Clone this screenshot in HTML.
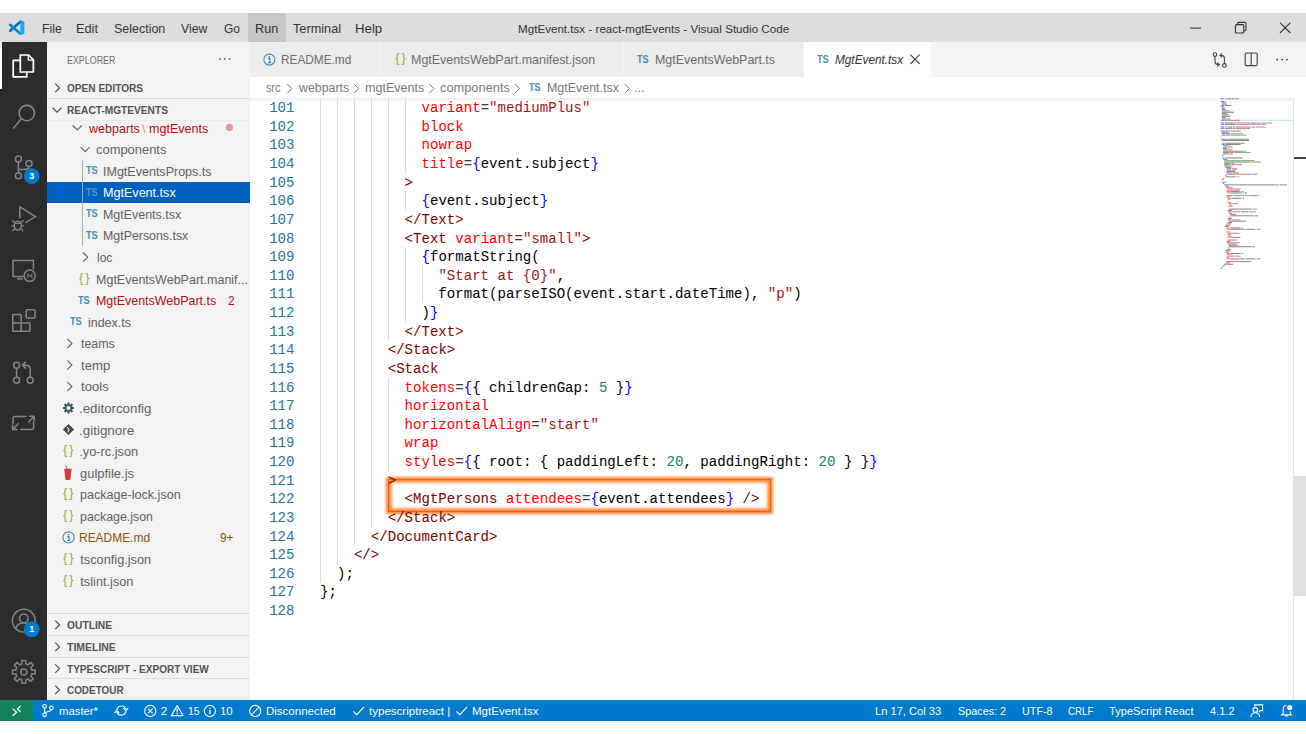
<!DOCTYPE html>
<html lang="en">
<head>
<meta charset="utf-8">
<title>MgtEvent.tsx - react-mgtEvents - Visual Studio Code</title>
<style>
*{box-sizing:border-box;margin:0;padding:0}
html,body{width:1306px;height:734px;overflow:hidden;background:#fff}
body{position:relative;font-family:"Liberation Sans",sans-serif;color:#616161;font-size:12.75px}
.layer{position:absolute;left:0;top:0;width:0;height:0;z-index:6}
.x{position:absolute;white-space:pre;line-height:20px;height:20px;z-index:6;transform-origin:0 0}
svg.ov{position:absolute;left:0;top:0;z-index:5;pointer-events:none}
#title{position:absolute;left:0;top:13px;width:1306px;height:29px;background:#dddddd}
#title .run{position:absolute;left:247.5px;top:0;width:38px;height:29px;background:#c6c6c6}
#act{position:absolute;left:0;top:42px;width:47px;height:658px;background:#2c2c2c}
#act .ind{position:absolute;left:0;top:0;width:2px;height:47px;background:#fff}
.badge{position:absolute;z-index:6;width:16px;height:16px;line-height:16px;text-align:center;color:#fff;font-size:9px;font-weight:bold}
#side{position:absolute;left:47px;top:42px;width:203px;height:658px;background:#f3f3f3;overflow:hidden}
#side .hr{position:absolute;left:0;width:203px;height:1px;background:#dcdcdc}
#side .sel{position:absolute;left:0;top:139.8px;width:203px;height:21.2px;background:#0060c0}
#side .ig{position:absolute;left:35.2px;top:118px;width:1px;height:86.4px;background:#a9a9a9}
#tabs{position:absolute;left:250px;top:42px;width:1056px;height:35px;background:#f3f3f3}
#tabs .tab{position:absolute;top:0;height:35px;background:#ececec;border-right:1px solid #f3f3f3}
#tabs .tab.on{background:#fff}
#crumbs{position:absolute;left:250px;top:77px;width:1056px;height:21px;background:#fff}
#editor{position:absolute;left:250px;top:98px;width:1056px;height:602px;background:#fff;overflow:hidden}
#editor .ln{position:relative;height:18.63px;line-height:18.63px;white-space:pre;font-family:"Liberation Mono",monospace;font-size:14.08px;color:#000;padding-left:70.1px;z-index:2}
#editor .ln b{position:absolute;left:0;top:0;width:44.5px;text-align:right;font-weight:normal;color:#237893}
#editor .ln i{font-style:normal}
#editor .code{position:absolute;left:0;top:1.2px;width:1043px}
#editor u{position:absolute;width:1px;background:#dcdcdc;text-decoration:none;display:block}
.e{color:#3a3a3a}.a{color:#ff0000}.s{color:#a31515}.b{color:#0000ff}.t{color:#800000}.n{color:#09885a}
#hl{position:absolute;left:137.5px;top:381px;width:383.6px;height:32.6px;border:1.2px solid #f2610f;box-shadow:0 0 2.5px 2px #ff8433,inset 0 0 3px 2.6px #ff8433;z-index:1}
#editor .shadow{position:absolute;left:0;top:0;width:1043px;height:6px;box-shadow:#dddddd 0 6px 6px -6px inset;z-index:3}
#sb{position:absolute;left:1043px;top:0;width:13px;height:602px;border-left:1px solid #e4e4e4;background:#fff;z-index:4}
#sb .th{position:absolute;left:0;top:378px;width:12px;height:120px;background:#e1e1e1}
#sb .mk{position:absolute;left:0;top:59px;width:12px;height:2px;background:#424242}
#status{position:absolute;left:0;top:699.7px;width:1306px;height:21px;background:#007acc}
#status .rem{position:absolute;left:0;top:0;width:33.4px;height:21px;background:#16825d}
</style>
</head>
<body>
<div id="title"><div class="run"></div></div>
<div id="act"><div class="ind"></div></div>
<div class="badge" style="left:23.7px;top:168.1px">3</div>
<div class="badge" style="left:23.7px;top:621.3px">1</div>
<div id="side">
<div class="hr" style="top:56.3px"></div>
<div class="hr" style="top:78.3px;background:#e9e9e9"></div>
<div class="hr" style="top:571.4px"></div>
<div class="hr" style="top:593.4px"></div>
<div class="hr" style="top:615.1px"></div>
<div class="hr" style="top:636.4px"></div>
<div class="sel"></div>
<div class="ig"></div>
</div>
<div id="tabs">
<div class="tab" style="left:0;width:129.5px"></div>
<div class="tab" style="left:129.5px;width:244px"></div>
<div class="tab" style="left:373.5px;width:180.5px"></div>
<div class="tab on" style="left:554px;width:128.4px"></div>
</div>
<div id="crumbs"></div>
<div id="editor">
<u style="left:70.1px;top:0.20px;height:484.38px"></u><u style="left:87.0px;top:0.20px;height:465.75px"></u><u style="left:103.9px;top:0.20px;height:447.12px"></u><u style="left:120.8px;top:0.20px;height:428.49px"></u><u style="left:137.7px;top:0.20px;height:242.19px"></u><u style="left:137.7px;top:279.65px;height:93.15px"></u><u style="left:137.7px;top:391.43px;height:18.63px"></u><u style="left:154.6px;top:0.20px;height:74.52px"></u><u style="left:154.6px;top:93.35px;height:18.63px"></u><u style="left:154.6px;top:149.24px;height:74.52px"></u><u style="left:171.5px;top:167.87px;height:37.26px"></u>

<div id="hl"></div>
<div class="code">
<div class="ln"><b>101</b>            <i class="a">variant</i><i class="e">=</i><i class="s">"mediumPlus"</i></div>
<div class="ln"><b>102</b>            <i class="a">block</i></div>
<div class="ln"><b>103</b>            <i class="a">nowrap</i></div>
<div class="ln"><b>104</b>            <i class="a">title</i><i class="e">=</i><i class="b">{</i>event.subject<i class="b">}</i></div>
<div class="ln"><b>105</b>          <i class="t">&gt;</i></div>
<div class="ln"><b>106</b>            <i class="b">{</i>event.subject<i class="b">}</i></div>
<div class="ln"><b>107</b>          <i class="t">&lt;/Text&gt;</i></div>
<div class="ln"><b>108</b>          <i class="t">&lt;Text</i> <i class="a">variant</i><i class="e">=</i><i class="s">"small"</i><i class="t">&gt;</i></div>
<div class="ln"><b>109</b>            <i class="b">{</i>formatString(</div>
<div class="ln"><b>110</b>              <i class="s">"Start at {0}"</i>,</div>
<div class="ln"><b>111</b>              format(parseISO(event.start.dateTime), <i class="s">"p"</i>)</div>
<div class="ln"><b>112</b>            )<i class="b">}</i></div>
<div class="ln"><b>113</b>          <i class="t">&lt;/Text&gt;</i></div>
<div class="ln"><b>114</b>        <i class="t">&lt;/Stack&gt;</i></div>
<div class="ln"><b>115</b>        <i class="t">&lt;Stack</i></div>
<div class="ln"><b>116</b>          <i class="a">tokens</i><i class="e">=</i><i class="b">{</i>{ childrenGap: <i class="n">5</i> }<i class="b">}</i></div>
<div class="ln"><b>117</b>          <i class="a">horizontal</i></div>
<div class="ln"><b>118</b>          <i class="a">horizontalAlign</i><i class="e">=</i><i class="s">"start"</i></div>
<div class="ln"><b>119</b>          <i class="a">wrap</i></div>
<div class="ln"><b>120</b>          <i class="a">styles</i><i class="e">=</i><i class="b">{</i>{ root: { paddingLeft: <i class="n">20</i>, paddingRight: <i class="n">20</i> } }<i class="b">}</i></div>
<div class="ln"><b>121</b>        <i class="t">&gt;</i></div>
<div class="ln"><b>122</b>          <i class="t">&lt;MgtPersons</i> <i class="a">attendees</i><i class="e">=</i><i class="b">{</i>event.attendees<i class="b">}</i> <i class="t">/&gt;</i></div>
<div class="ln"><b>123</b>        <i class="t">&lt;/Stack&gt;</i></div>
<div class="ln"><b>124</b>      <i class="t">&lt;/DocumentCard&gt;</i></div>
<div class="ln"><b>125</b>    <i class="t">&lt;/&gt;</i></div>
<div class="ln"><b>126</b>  );</div>
<div class="ln"><b>127</b>};</div>
<div class="ln"><b>128</b></div>
</div>
<div class="shadow"></div>
<div id="sb"><div class="mk"></div><div class="th"></div></div>
</div>
<div id="status"><div class="rem"></div></div>
<svg class="ov" width="1306" height="734" viewBox="0 0 1306 734">
<g transform="translate(8.4,19.5) scale(1.03)"><path d="M11.4 2.4 L1.7 10.9" stroke="#0a6cbd" stroke-width="2.5" stroke-linecap="round"/><path d="M11.4 13.6 L1.7 5.1" stroke="#0a84d8" stroke-width="2.5" stroke-linecap="round"/><path d="M11.6 0.5 L15.5 2.4 V13.6 L11.6 15.5 Z" fill="#22a0f2"/></g>
<path d="M1190 28.1 H1201" stroke="#333333" stroke-width="1.1"/><g fill="none" stroke="#333333" stroke-width="1.1"><rect x="1235.4" y="24.6" width="8.4" height="8.4" rx="1"/><path d="M1237.6 24.4 V23.4 Q1237.6 22.4 1238.6 22.4 H1245 Q1246 22.4 1246 23.4 V29.8 Q1246 30.8 1245 30.8 H1244"/></g><path d="M1280 22.6 L1290.4 33 M1290.4 22.6 L1280 33" stroke="#333333" stroke-width="1.1"/>
<g fill="none" stroke="#ffffff" stroke-width="1.7" stroke-linejoin="round" stroke-linecap="round"><path d="M20.3 55 H28.6 L33.4 59.8 V72 H20.3 Z"/><path d="M28.3 55.3 V60.1 H33.2" stroke-width="1.3"/><path d="M19.8 60.3 H13.2 V76.8 H26.8 V72.6"/></g>
<g fill="none" stroke="#868686" stroke-width="1.6"><circle cx="26.8" cy="113.1" r="7.7"/><path d="M21.4 118.7 L13.2 128.4"/></g>
<g fill="none" stroke="#868686" stroke-width="1.5"><circle cx="18.4" cy="159.1" r="3"/><circle cx="29" cy="163.6" r="3"/><circle cx="18.4" cy="175.7" r="3"/><path d="M18.4 162.1 V172.7 M29 166.6 C29 169.6 26 169.6 22.5 169.6 H18.6"/></g>
<circle cx="31.7" cy="176.1" r="7.9" fill="#007acc"/>
<g fill="none" stroke="#868686" stroke-width="1.5" stroke-linejoin="miter"><path d="M19.8 218.3 V206.8 L35.5 216.6 L25.2 222.8"/><ellipse cx="17.8" cy="225.6" rx="3.6" ry="4.4"/><path d="M14.6 222.4 L12 220.2 M21 222.4 L23.6 220.2 M14.2 225.8 H11.4 M21.4 225.8 H24.2 M14.8 228.8 L12.2 231 M20.8 228.8 L23.4 231 M15 223.4 H20.6" stroke-width="1.3"/></g>
<g fill="none" stroke="#868686" stroke-width="1.5"><path d="M23.6 276.4 H13 V260.4 H33.4 V269.6"/><path d="M17 278.9 H22.8"/><circle cx="29.7" cy="275.7" r="5.6"/><path d="M27.2 273.9 L29 275.7 L27.2 277.5 M32.4 273.9 L30.6 275.7 L32.4 277.5" stroke-width="1.1"/></g>
<g fill="none" stroke="#868686" stroke-width="1.5" stroke-linejoin="round"><path d="M21.2 314.4 H12.8 V331.3 H29.9 V322.9 H12.8 M21.2 314.4 V331.3"/><rect x="26.2" y="309.8" width="8.8" height="8.2" rx="0.8"/></g>
<g fill="none" stroke="#868686" stroke-width="1.5"><circle cx="16.6" cy="365.2" r="3"/><circle cx="16.6" cy="380.2" r="3"/><circle cx="30.2" cy="380.2" r="3"/><path d="M16.6 368.2 V377.2 M30.2 377.2 V369.4 C30.2 366.2 28.4 365.2 25.6 365.2 H22.8 M25.8 361.8 L22.4 365.2 L25.8 368.6"/></g>
<g fill="none" stroke="#868686" stroke-width="1.5" stroke-linecap="round" stroke-linejoin="round"><path d="M26 416.4 H15 Q13 416.4 13 418.4 V423.6 M20.6 429.4 H31.6 Q33.6 429.4 33.6 427.4 V422"/><path d="M28.6 422 L34 416.4 M29.8 416.2 H34.2 V420.6 M18.2 423.8 L12.8 429.4 M12.6 425.2 V429.6 H17"/></g>
<g fill="none" stroke="#868686" stroke-width="1.5"><circle cx="23.8" cy="620.7" r="11.4"/><circle cx="23.8" cy="618.4" r="4.3"/><path d="M15.6 628.6 C16.6 624.8 19.6 622.9 23.8 622.9 C28 622.9 31 624.8 32 628.6"/></g>
<circle cx="31.7" cy="629.3" r="7.9" fill="#007acc"/>
<g fill="none" stroke="#868686" stroke-width="1.5" stroke-linejoin="round"><path d="M21.8 663.9 L21.8 660.5 L25.8 660.5 L25.8 663.9 L28.0 664.9 L30.5 662.4 L33.3 665.2 L30.8 667.7 L31.8 669.9 L35.2 669.9 L35.2 673.9 L31.8 673.9 L30.8 676.1 L33.3 678.6 L30.5 681.4 L28.0 678.9 L25.8 679.9 L25.8 683.3 L21.8 683.3 L21.8 679.9 L19.6 678.9 L17.1 681.4 L14.3 678.6 L16.8 676.1 L15.8 673.9 L12.4 673.9 L12.4 669.9 L15.8 669.9 L16.8 667.7 L14.3 665.2 L17.1 662.4 L19.6 664.9 Z"/><circle cx="23.8" cy="671.9" r="3"/></g>
<circle cx="220" cy="58.9" r="0.95" fill="#5a5a5a"/>
<circle cx="224.8" cy="58.9" r="0.95" fill="#5a5a5a"/>
<circle cx="229.6" cy="58.9" r="0.95" fill="#5a5a5a"/>
<path d="M55.3 83.7 L59.5 87.9 L55.3 92.1" fill="none" stroke="#4d4d4d" stroke-width="1.2"/>
<path d="M52.5 107.6 L57.0 112.1 L61.5 107.6" fill="none" stroke="#4d4d4d" stroke-width="1.2"/>
<path d="M55.3 620.7 L59.5 624.9 L55.3 629.1" fill="none" stroke="#4d4d4d" stroke-width="1.2"/>
<path d="M55.3 642.7 L59.5 646.9 L55.3 651.1" fill="none" stroke="#4d4d4d" stroke-width="1.2"/>
<path d="M55.3 664.4 L59.5 668.6 L55.3 672.8" fill="none" stroke="#4d4d4d" stroke-width="1.2"/>
<path d="M55.3 685.6 L59.5 689.8 L55.3 694.0" fill="none" stroke="#4d4d4d" stroke-width="1.2"/>
<path d="M72.8 125.5 L77.3 130.0 L81.8 125.5" fill="none" stroke="#616161" stroke-width="1.1"/>
<path d="M80.7 147.1 L85.2 151.6 L89.7 147.1" fill="none" stroke="#616161" stroke-width="1.1"/>
<path d="M83.1 252.5 L87.7 257.1 L83.1 261.7" fill="none" stroke="#616161" stroke-width="1.1"/>
<path d="M67.3 338.8 L71.9 343.4 L67.3 348.0" fill="none" stroke="#616161" stroke-width="1.1"/>
<path d="M67.3 360.4 L71.9 365.0 L67.3 369.6" fill="none" stroke="#616161" stroke-width="1.1"/>
<path d="M67.3 381.9 L71.9 386.5 L67.3 391.2" fill="none" stroke="#616161" stroke-width="1.1"/>
<circle cx="229.5" cy="127.4" r="3.6" fill="#e29b9b"/>
<path d="M72.4 407.0 L74.0 406.9 L74.0 409.1 L72.4 409.0 L72.0 410.0 L73.2 411.1 L71.6 412.7 L70.5 411.5 L69.5 411.9 L69.6 413.5 L67.4 413.5 L67.5 411.9 L66.5 411.5 L65.4 412.7 L63.8 411.1 L65.0 410.0 L64.6 409.0 L63.0 409.1 L63.0 406.9 L64.6 407.0 L65.0 406.0 L63.8 404.9 L65.4 403.3 L66.5 404.5 L67.5 404.1 L67.4 402.5 L69.6 402.5 L69.5 404.1 L70.5 404.5 L71.6 403.3 L73.2 404.9 L72.0 406.0 Z" fill="#42535b"/><circle cx="68.5" cy="408.0" r="2.1" fill="#f3f3f3"/>
<path d="M68.5 423.9 L74.1 429.5 L68.5 435.1 L62.9 429.5 Z" fill="#3b4b53"/><path d="M67 426.9 L69.6 429.5 M68.3 428.3 V432.3" stroke="#f3f3f3" stroke-width="1" fill="none"/>
<path d="M64.2 468.8 H71.6 L70.4 479.4 Q67.9 480.4 65.4 479.4 Z" fill="#cc3e44"/><path d="M65.4 465.4 L67.4 468.8" stroke="#cc3e44" stroke-width="1" fill="none"/>
<circle cx="68.6" cy="537.43" r="5.6" fill="none" stroke="#3e8fb3" stroke-width="1.1"/><circle cx="68.6" cy="534.8299999999999" r="0.9" fill="#3e8fb3"/><path d="M67.3 536.53 H69.1 V540.53 M67.1 540.53 H70.3" stroke="#3e8fb3" stroke-width="1.2" fill="none"/>
<circle cx="269.4" cy="59.6" r="5.5" fill="none" stroke="#3e8fb3" stroke-width="1.1"/><circle cx="269.4" cy="57.0" r="0.9" fill="#3e8fb3"/><path d="M268.09999999999997 58.7 H269.9 V62.7 M267.9 62.7 H271.09999999999997" stroke="#3e8fb3" stroke-width="1.2" fill="none"/>
<path d="M910.4 54.6 L919.6 63.8 M919.6 54.6 L910.4 63.8" stroke="#333333" stroke-width="1.1"/>
<g fill="none" stroke="#424242" stroke-width="1.1"><circle cx="1215" cy="54.6" r="1.8"/><circle cx="1224.4" cy="65.4" r="1.8"/><path d="M1215 56.4 V61.6 Q1215 64.6 1218 64.6 H1219 M1217.2 62.6 L1219.4 64.6 L1217.2 66.6 M1224.4 63.6 V58.4 Q1224.4 55.4 1221.4 55.4 H1220.4 M1222.2 53.4 L1220 55.4 L1222.2 57.4"/></g>
<g fill="none" stroke="#424242" stroke-width="1.1"><rect x="1245.2" y="53" width="12" height="12.6" rx="1.2"/><path d="M1251.2 53 V65.6"/></g>
<circle cx="1277.2" cy="59.6" r="0.95" fill="#424242"/>
<circle cx="1282.1" cy="59.6" r="0.95" fill="#424242"/>
<circle cx="1287" cy="59.6" r="0.95" fill="#424242"/>
<path d="M287.3 84.0 L291.9 88.6 L287.3 93.2" fill="none" stroke="#7a7a7a" stroke-width="1.0"/>
<path d="M354.1 84.0 L358.7 88.6 L354.1 93.2" fill="none" stroke="#7a7a7a" stroke-width="1.0"/>
<path d="M429.3 84.0 L433.9 88.6 L429.3 93.2" fill="none" stroke="#7a7a7a" stroke-width="1.0"/>
<path d="M514.8 84.0 L519.4 88.6 L514.8 93.2" fill="none" stroke="#7a7a7a" stroke-width="1.0"/>
<path d="M624.8 84.0 L629.4 88.6 L624.8 93.2" fill="none" stroke="#7a7a7a" stroke-width="1.0"/>
<g fill="none" stroke="#ffffff" stroke-width="1.2"><path d="M12.6 708.6 L16.6 712.2 L12.6 715.8"/><path d="M20.6 706 L17.4 709 L20.6 712"/></g>
<g fill="none" stroke="#ffffff" stroke-width="1.1"><circle cx="44.6" cy="706.3" r="1.8"/><circle cx="44.6" cy="714.8" r="1.8"/><circle cx="51.4" cy="707.8" r="1.8"/><path d="M44.6 708.1 V713 M51.4 709.6 C51.4 711.6 48.4 711.4 44.8 712.6"/></g>
<g fill="none" stroke="#ffffff" stroke-width="1.2"><path d="M116.9 710 A4.6 4.6 0 0 1 125.9 709.4 M125.9 711.2 A4.6 4.6 0 0 1 116.9 711.8"/><path d="M123.4 708.2 L125.9 710.6 L128.3 708.2 M114.5 713 L116.9 710.6 L119.4 713" stroke-width="1.1"/></g>
<g fill="none" stroke="#ffffff" stroke-width="1.1"><circle cx="150.3" cy="711" r="5.6"/><path d="M147.9 708.6 L152.7 713.4 M152.7 708.6 L147.9 713.4"/></g>
<g fill="none" stroke="#ffffff" stroke-width="1.1" stroke-linejoin="round"><path d="M177.2 705.6 L183.1 715.6 H171.3 Z"/><path d="M177.2 708.6 V712.4 M177.2 713.3 V714.4" stroke-width="1.2"/></g>
<g fill="none" stroke="#ffffff" stroke-width="1.1"><circle cx="209.9" cy="711" r="5.6"/><path d="M209.9 710 V714" stroke-width="1.3"/><circle cx="209.9" cy="708.2" r="0.8" fill="#ffffff" stroke="none"/></g>
<g fill="none" stroke="#ffffff" stroke-width="1.1"><circle cx="255.2" cy="711" r="5.6"/><path d="M251.4 714.8 L259 707.2"/></g>
<path d="M353.4 711.4 L356.79999999999995 714.6 L364.0 706.8" fill="none" stroke="#ffffff" stroke-width="1.2"/>
<path d="M456.4 711.4 L459.79999999999995 714.6 L467.0 706.8" fill="none" stroke="#ffffff" stroke-width="1.2"/>
<g fill="none" stroke="#ffffff" stroke-width="1.1"><circle cx="1255.3" cy="709.9" r="2.3"/><path d="M1251 717 A4.3 4.3 0 0 1 1259.6 717"/><path d="M1254.6 706.4 V704.9 H1262.6 V710.6 H1260.4 L1258.8 712.2"/></g>
<g fill="none" stroke="#ffffff" stroke-width="1.1"><path d="M1286.2 705.2 C1283.8 705.6 1283.2 707.6 1283.2 709.6 V713 L1281.6 714.9 H1291.4 L1290.2 713 V711.2"/><path d="M1285 715.2 Q1286.5 717.4 1288 715.2"/></g><circle cx="1289.7" cy="707.5" r="2.6" fill="#ffffff"/>
<g opacity="0.62"><rect x="1220" y="119.8" width="73" height="1" fill="#9fd0f7"/><rect x="1220.6" y="98.30" width="3.6" height="1" fill="#2a2af0"/><rect x="1224.8" y="98.30" width="0.6" height="1" fill="#3a3a3a"/><rect x="1226.0" y="98.30" width="1.2" height="1" fill="#2a2af0"/><rect x="1227.8" y="98.30" width="3.0" height="1" fill="#3a3a3a"/><rect x="1231.4" y="98.30" width="2.4" height="1" fill="#2a2af0"/><rect x="1234.4" y="98.30" width="4.2" height="1" fill="#b03030"/><rect x="1238.6" y="98.30" width="0.6" height="1" fill="#3a3a3a"/><rect x="1220.6" y="100.99" width="3.6" height="1" fill="#2a2af0"/><rect x="1224.8" y="100.99" width="0.6" height="1" fill="#3a3a3a"/><rect x="1221.8" y="102.33" width="4.2" height="1" fill="#3a3a3a"/><rect x="1221.8" y="103.68" width="5.4" height="1" fill="#3a3a3a"/><rect x="1220.6" y="105.02" width="0.6" height="1" fill="#3a3a3a"/><rect x="1221.8" y="105.02" width="2.4" height="1" fill="#2a2af0"/><rect x="1224.8" y="105.02" width="6.0" height="1" fill="#b03030"/><rect x="1230.8" y="105.02" width="0.6" height="1" fill="#3a3a3a"/><rect x="1220.6" y="106.37" width="3.6" height="1" fill="#2a2af0"/><rect x="1224.8" y="106.37" width="0.6" height="1" fill="#3a3a3a"/><rect x="1221.8" y="107.72" width="3.0" height="1" fill="#3a3a3a"/><rect x="1221.8" y="109.06" width="3.6" height="1" fill="#3a3a3a"/><rect x="1221.8" y="110.41" width="7.8" height="1" fill="#3a3a3a"/><rect x="1221.8" y="111.75" width="12.0" height="1" fill="#3a3a3a"/><rect x="1221.8" y="113.09" width="5.4" height="1" fill="#3a3a3a"/><rect x="1221.8" y="114.44" width="7.2" height="1" fill="#3a3a3a"/><rect x="1221.8" y="115.78" width="9.0" height="1" fill="#3a3a3a"/><rect x="1221.8" y="117.13" width="4.2" height="1" fill="#3a3a3a"/><rect x="1221.8" y="118.47" width="3.6" height="1" fill="#3a3a3a"/><rect x="1226.0" y="118.47" width="1.2" height="1" fill="#2a2af0"/><rect x="1227.8" y="118.47" width="2.4" height="1" fill="#3a3a3a"/><rect x="1220.6" y="119.82" width="0.6" height="1" fill="#3a3a3a"/><rect x="1221.8" y="119.82" width="2.4" height="1" fill="#2a2af0"/><rect x="1224.8" y="119.82" width="14.4" height="1" fill="#b03030"/><rect x="1239.2" y="119.82" width="0.6" height="1" fill="#3a3a3a"/><rect x="1220.6" y="122.51" width="3.6" height="1" fill="#2a2af0"/><rect x="1224.8" y="122.51" width="8.4" height="1" fill="#3a3a3a"/><rect x="1233.8" y="122.51" width="2.4" height="1" fill="#2a2af0"/><rect x="1236.8" y="122.51" width="8.4" height="1" fill="#b03030"/><rect x="1245.2" y="122.51" width="0.6" height="1" fill="#3a3a3a"/><rect x="1246.4" y="122.51" width="3.6" height="1" fill="#2a2af0"/><rect x="1250.6" y="122.51" width="6.0" height="1" fill="#3a3a3a"/><rect x="1257.2" y="122.51" width="2.4" height="1" fill="#2a2af0"/><rect x="1260.2" y="122.51" width="11.4" height="1" fill="#b03030"/><rect x="1271.6" y="122.51" width="0.6" height="1" fill="#3a3a3a"/><rect x="1220.6" y="123.85" width="3.6" height="1" fill="#2a2af0"/><rect x="1224.8" y="123.85" width="10.8" height="1" fill="#3a3a3a"/><rect x="1236.2" y="123.85" width="2.4" height="1" fill="#2a2af0"/><rect x="1239.2" y="123.85" width="21.0" height="1" fill="#b03030"/><rect x="1260.2" y="123.85" width="0.6" height="1" fill="#3a3a3a"/><rect x="1261.4" y="123.85" width="4.8" height="1" fill="#1a8a1a"/><rect x="1220.6" y="126.55" width="3.6" height="1" fill="#2a2af0"/><rect x="1224.8" y="126.55" width="0.6" height="1" fill="#3a3a3a"/><rect x="1226.0" y="126.55" width="1.2" height="1" fill="#2a2af0"/><rect x="1227.8" y="126.55" width="4.2" height="1" fill="#3a3a3a"/><rect x="1232.6" y="126.55" width="2.4" height="1" fill="#2a2af0"/><rect x="1235.6" y="126.55" width="15.0" height="1" fill="#b03030"/><rect x="1250.6" y="126.55" width="0.6" height="1" fill="#3a3a3a"/><rect x="1251.8" y="126.55" width="3.6" height="1" fill="#2a2af0"/><rect x="1256.0" y="126.55" width="9.6" height="1" fill="#b03030"/><rect x="1265.6" y="126.55" width="0.6" height="1" fill="#3a3a3a"/><rect x="1220.6" y="127.89" width="3.6" height="1" fill="#2a2af0"/><rect x="1224.8" y="127.89" width="7.2" height="1" fill="#3a3a3a"/><rect x="1232.6" y="127.89" width="2.4" height="1" fill="#2a2af0"/><rect x="1235.6" y="127.89" width="13.8" height="1" fill="#b03030"/><rect x="1249.4" y="127.89" width="0.6" height="1" fill="#3a3a3a"/><rect x="1220.6" y="130.58" width="9.6" height="1" fill="#2a2af0"/><rect x="1230.8" y="130.58" width="9.6" height="1" fill="#3a3a3a"/><rect x="1221.8" y="131.93" width="3.6" height="1" fill="#3a3a3a"/><rect x="1226.0" y="131.93" width="1.8" height="1" fill="#2a2af0"/><rect x="1227.8" y="131.93" width="0.6" height="1" fill="#3a3a3a"/><rect x="1221.8" y="133.27" width="9.0" height="1" fill="#3a3a3a"/><rect x="1231.4" y="133.27" width="11.4" height="1" fill="#1a8a1a"/><rect x="1221.8" y="134.62" width="3.6" height="1" fill="#3a3a3a"/><rect x="1226.0" y="134.62" width="3.6" height="1" fill="#2a2af0"/><rect x="1229.6" y="134.62" width="0.6" height="1" fill="#3a3a3a"/><rect x="1230.8" y="134.62" width="15.6" height="1" fill="#1a8a1a"/><rect x="1220.6" y="135.96" width="0.6" height="1" fill="#3a3a3a"/><rect x="1220.6" y="138.65" width="7.2" height="1" fill="#2a2af0"/><rect x="1228.4" y="138.65" width="20.4" height="1" fill="#3a3a3a"/><rect x="1221.8" y="140.00" width="27.6" height="1" fill="#3a3a3a"/><rect x="1221.8" y="142.69" width="3.0" height="1" fill="#2a2af0"/><rect x="1225.4" y="142.69" width="19.2" height="1" fill="#3a3a3a"/><rect x="1221.8" y="144.03" width="3.0" height="1" fill="#2a2af0"/><rect x="1225.4" y="144.03" width="15.0" height="1" fill="#3a3a3a"/><rect x="1223.0" y="145.38" width="5.4" height="1" fill="#3a3a3a"/><rect x="1229.0" y="145.38" width="1.2" height="1" fill="#2a9a70"/><rect x="1230.2" y="145.38" width="0.6" height="1" fill="#3a3a3a"/><rect x="1223.0" y="146.72" width="4.2" height="1" fill="#3a3a3a"/><rect x="1227.8" y="146.72" width="1.2" height="1" fill="#2a9a70"/><rect x="1229.0" y="146.72" width="0.6" height="1" fill="#3a3a3a"/><rect x="1230.2" y="146.72" width="2.4" height="1" fill="#b03030"/><rect x="1223.0" y="148.06" width="3.6" height="1" fill="#3a3a3a"/><rect x="1227.2" y="148.06" width="1.2" height="1" fill="#2a9a70"/><rect x="1228.4" y="148.06" width="0.6" height="1" fill="#3a3a3a"/><rect x="1223.0" y="149.41" width="4.2" height="1" fill="#3a3a3a"/><rect x="1227.8" y="149.41" width="4.2" height="1" fill="#b03030"/><rect x="1232.0" y="149.41" width="0.6" height="1" fill="#3a3a3a"/><rect x="1223.0" y="150.75" width="20.4" height="1" fill="#3a3a3a"/><rect x="1244.0" y="150.75" width="1.8" height="1" fill="#b03030"/><rect x="1223.0" y="152.10" width="6.6" height="1" fill="#3a3a3a"/><rect x="1230.2" y="152.10" width="3.6" height="1" fill="#b03030"/><rect x="1233.8" y="152.10" width="0.6" height="1" fill="#3a3a3a"/><rect x="1235.0" y="152.10" width="15.6" height="1" fill="#1a8a1a"/><rect x="1223.0" y="153.44" width="4.8" height="1" fill="#3a3a3a"/><rect x="1228.4" y="153.44" width="3.6" height="1" fill="#b03030"/><rect x="1232.0" y="153.44" width="0.6" height="1" fill="#3a3a3a"/><rect x="1221.8" y="154.79" width="1.8" height="1" fill="#3a3a3a"/><rect x="1221.8" y="157.48" width="3.0" height="1" fill="#2a2af0"/><rect x="1225.4" y="157.48" width="17.4" height="1" fill="#3a3a3a"/><rect x="1223.0" y="158.82" width="4.2" height="1" fill="#3a3a3a"/><rect x="1224.2" y="160.17" width="30.6" height="1" fill="#1a8a1a"/><rect x="1224.2" y="161.51" width="26.4" height="1" fill="#3a3a3a"/><rect x="1251.2" y="161.51" width="4.2" height="1" fill="#b03030"/><rect x="1255.4" y="161.51" width="5.4" height="1" fill="#3a3a3a"/><rect x="1224.2" y="162.86" width="5.4" height="1" fill="#3a3a3a"/><rect x="1230.2" y="162.86" width="3.6" height="1" fill="#b03030"/><rect x="1233.8" y="162.86" width="0.6" height="1" fill="#3a3a3a"/><rect x="1224.2" y="164.20" width="7.2" height="1" fill="#3a3a3a"/><rect x="1232.0" y="164.20" width="4.8" height="1" fill="#b03030"/><rect x="1236.8" y="164.20" width="4.8" height="1" fill="#3a3a3a"/><rect x="1224.2" y="165.55" width="5.4" height="1" fill="#3a3a3a"/><rect x="1230.2" y="165.55" width="1.8" height="1" fill="#2a9a70"/><rect x="1232.0" y="165.55" width="0.6" height="1" fill="#3a3a3a"/><rect x="1225.4" y="166.89" width="6.0" height="1" fill="#3a3a3a"/><rect x="1226.6" y="168.24" width="4.8" height="1" fill="#3a3a3a"/><rect x="1232.0" y="168.24" width="4.8" height="1" fill="#b03030"/><rect x="1236.8" y="168.24" width="0.6" height="1" fill="#3a3a3a"/><rect x="1226.6" y="169.58" width="4.8" height="1" fill="#3a3a3a"/><rect x="1232.0" y="169.58" width="3.6" height="1" fill="#b03030"/><rect x="1235.6" y="169.58" width="0.6" height="1" fill="#3a3a3a"/><rect x="1226.6" y="170.93" width="8.4" height="1" fill="#3a3a3a"/><rect x="1226.6" y="172.27" width="4.8" height="1" fill="#b03030"/><rect x="1231.4" y="172.27" width="0.6" height="1" fill="#3a3a3a"/><rect x="1232.6" y="172.27" width="5.4" height="1" fill="#b03030"/><rect x="1238.0" y="172.27" width="0.6" height="1" fill="#3a3a3a"/><rect x="1226.6" y="173.62" width="9.0" height="1" fill="#3a3a3a"/><rect x="1236.2" y="173.62" width="9.0" height="1" fill="#b03030"/><rect x="1245.2" y="173.62" width="6.0" height="1" fill="#3a3a3a"/><rect x="1251.8" y="173.62" width="4.8" height="1" fill="#b03030"/><rect x="1256.6" y="173.62" width="0.6" height="1" fill="#3a3a3a"/><rect x="1225.4" y="174.96" width="1.2" height="1" fill="#3a3a3a"/><rect x="1225.4" y="176.31" width="10.2" height="1" fill="#3a3a3a"/><rect x="1236.2" y="176.31" width="1.2" height="1" fill="#2a9a70"/><rect x="1238.0" y="176.31" width="1.2" height="1" fill="#3a3a3a"/><rect x="1223.0" y="177.66" width="1.2" height="1" fill="#3a3a3a"/><rect x="1221.8" y="179.00" width="1.8" height="1" fill="#3a3a3a"/><rect x="1221.8" y="181.69" width="3.6" height="1" fill="#2a2af0"/><rect x="1226.0" y="181.69" width="0.6" height="1" fill="#3a3a3a"/><rect x="1223.0" y="183.03" width="1.2" height="1" fill="#3a3a3a"/><rect x="1224.2" y="184.38" width="50.4" height="1" fill="#3a3a3a"/><rect x="1274.6" y="184.38" width="4.8" height="1" fill="#b03030"/><rect x="1280.0" y="184.38" width="7.2" height="1" fill="#3a3a3a"/><rect x="1225.4" y="185.72" width="3.6" height="1" fill="#902020"/><rect x="1226.6" y="187.07" width="6.0" height="1" fill="#f03030"/><rect x="1226.6" y="188.41" width="9.6" height="1" fill="#f03030"/><rect x="1236.2" y="188.41" width="4.2" height="1" fill="#b03030"/><rect x="1226.6" y="189.76" width="8.4" height="1" fill="#f03030"/><rect x="1235.0" y="189.76" width="4.8" height="1" fill="#b03030"/><rect x="1226.6" y="191.10" width="4.2" height="1" fill="#f03030"/><rect x="1230.8" y="191.10" width="9.0" height="1" fill="#3a3a3a"/><rect x="1240.4" y="191.10" width="1.2" height="1" fill="#2a9a70"/><rect x="1242.2" y="191.10" width="1.2" height="1" fill="#3a3a3a"/><rect x="1226.6" y="192.45" width="4.2" height="1" fill="#f03030"/><rect x="1230.8" y="192.45" width="11.4" height="1" fill="#3a3a3a"/><rect x="1242.8" y="192.45" width="1.2" height="1" fill="#2a9a70"/><rect x="1244.6" y="192.45" width="2.4" height="1" fill="#3a3a3a"/><rect x="1225.4" y="193.80" width="0.6" height="1" fill="#902020"/><rect x="1226.6" y="195.14" width="5.4" height="1" fill="#902020"/><rect x="1232.6" y="195.14" width="5.4" height="1" fill="#f03030"/><rect x="1238.0" y="195.14" width="6.0" height="1" fill="#b03030"/><rect x="1244.6" y="195.14" width="6.0" height="1" fill="#f03030"/><rect x="1250.6" y="195.14" width="6.6" height="1" fill="#3a3a3a"/><rect x="1257.8" y="195.14" width="1.2" height="1" fill="#902020"/><rect x="1226.6" y="196.49" width="3.6" height="1" fill="#902020"/><rect x="1227.8" y="197.83" width="4.2" height="1" fill="#f03030"/><rect x="1232.0" y="197.83" width="9.0" height="1" fill="#3a3a3a"/><rect x="1241.6" y="197.83" width="0.6" height="1" fill="#2a9a70"/><rect x="1242.8" y="197.83" width="1.2" height="1" fill="#3a3a3a"/><rect x="1227.8" y="199.18" width="2.4" height="1" fill="#f03030"/><rect x="1226.6" y="200.52" width="0.6" height="1" fill="#902020"/><rect x="1227.8" y="201.87" width="3.0" height="1" fill="#902020"/><rect x="1229.0" y="203.21" width="4.8" height="1" fill="#f03030"/><rect x="1233.8" y="203.21" width="4.2" height="1" fill="#b03030"/><rect x="1229.0" y="204.56" width="3.0" height="1" fill="#f03030"/><rect x="1229.0" y="205.90" width="3.6" height="1" fill="#f03030"/><rect x="1227.8" y="207.25" width="0.6" height="1" fill="#902020"/><rect x="1229.0" y="208.59" width="23.4" height="1" fill="#3a3a3a"/><rect x="1253.0" y="208.59" width="2.4" height="1" fill="#b03030"/><rect x="1255.4" y="208.59" width="1.2" height="1" fill="#3a3a3a"/><rect x="1227.8" y="209.94" width="4.2" height="1" fill="#902020"/><rect x="1227.8" y="211.28" width="3.0" height="1" fill="#902020"/><rect x="1231.4" y="211.28" width="4.8" height="1" fill="#f03030"/><rect x="1236.2" y="211.28" width="4.2" height="1" fill="#b03030"/><rect x="1241.0" y="211.28" width="7.2" height="1" fill="#3a3a3a"/><rect x="1248.8" y="211.28" width="3.6" height="1" fill="#f03030"/><rect x="1252.4" y="211.28" width="3.0" height="1" fill="#b03030"/><rect x="1255.4" y="211.28" width="0.6" height="1" fill="#902020"/><rect x="1229.0" y="212.62" width="3.0" height="1" fill="#3a3a3a"/><rect x="1230.2" y="213.97" width="5.4" height="1" fill="#b03030"/><rect x="1235.6" y="213.97" width="0.6" height="1" fill="#3a3a3a"/><rect x="1230.2" y="215.31" width="22.8" height="1" fill="#3a3a3a"/><rect x="1253.6" y="215.31" width="3.6" height="1" fill="#b03030"/><rect x="1257.2" y="215.31" width="0.6" height="1" fill="#3a3a3a"/><rect x="1229.0" y="216.66" width="1.2" height="1" fill="#3a3a3a"/><rect x="1227.8" y="218.00" width="4.2" height="1" fill="#902020"/><rect x="1227.8" y="219.35" width="3.0" height="1" fill="#902020"/><rect x="1231.4" y="219.35" width="4.8" height="1" fill="#f03030"/><rect x="1236.2" y="219.35" width="3.6" height="1" fill="#b03030"/><rect x="1239.8" y="219.35" width="0.6" height="1" fill="#902020"/><rect x="1229.0" y="220.69" width="16.8" height="1" fill="#3a3a3a"/><rect x="1227.8" y="222.04" width="4.2" height="1" fill="#902020"/><rect x="1226.6" y="223.38" width="4.8" height="1" fill="#902020"/><rect x="1225.4" y="224.73" width="4.8" height="1" fill="#902020"/><rect x="1225.4" y="226.07" width="3.6" height="1" fill="#902020"/><rect x="1226.6" y="227.42" width="4.2" height="1" fill="#f03030"/><rect x="1230.8" y="227.42" width="9.0" height="1" fill="#3a3a3a"/><rect x="1240.4" y="227.42" width="0.6" height="1" fill="#2a9a70"/><rect x="1241.6" y="227.42" width="1.2" height="1" fill="#3a3a3a"/><rect x="1226.6" y="228.76" width="4.2" height="1" fill="#f03030"/><rect x="1230.8" y="228.76" width="13.8" height="1" fill="#3a3a3a"/><rect x="1245.2" y="228.76" width="1.2" height="1" fill="#2a9a70"/><rect x="1246.4" y="228.76" width="9.0" height="1" fill="#3a3a3a"/><rect x="1256.0" y="228.76" width="1.2" height="1" fill="#2a9a70"/><rect x="1257.8" y="228.76" width="2.4" height="1" fill="#3a3a3a"/><rect x="1225.4" y="230.11" width="0.6" height="1" fill="#902020"/><rect x="1226.6" y="231.45" width="3.0" height="1" fill="#902020"/><rect x="1227.8" y="232.80" width="4.8" height="1" fill="#f03030"/><rect x="1232.6" y="232.80" width="7.2" height="1" fill="#b03030"/><rect x="1227.8" y="234.14" width="3.0" height="1" fill="#f03030"/><rect x="1227.8" y="235.49" width="3.6" height="1" fill="#f03030"/><rect x="1227.8" y="236.83" width="3.6" height="1" fill="#f03030"/><rect x="1231.4" y="236.83" width="9.0" height="1" fill="#3a3a3a"/><rect x="1226.6" y="238.18" width="0.6" height="1" fill="#902020"/><rect x="1227.8" y="239.52" width="9.0" height="1" fill="#3a3a3a"/><rect x="1226.6" y="240.87" width="4.2" height="1" fill="#902020"/><rect x="1226.6" y="242.21" width="3.0" height="1" fill="#902020"/><rect x="1230.2" y="242.21" width="4.8" height="1" fill="#f03030"/><rect x="1235.0" y="242.21" width="4.2" height="1" fill="#b03030"/><rect x="1239.2" y="242.21" width="0.6" height="1" fill="#902020"/><rect x="1227.8" y="243.56" width="8.4" height="1" fill="#3a3a3a"/><rect x="1229.0" y="244.90" width="8.4" height="1" fill="#b03030"/><rect x="1237.4" y="244.90" width="0.6" height="1" fill="#3a3a3a"/><rect x="1229.0" y="246.25" width="22.8" height="1" fill="#3a3a3a"/><rect x="1252.4" y="246.25" width="1.8" height="1" fill="#b03030"/><rect x="1254.2" y="246.25" width="0.6" height="1" fill="#3a3a3a"/><rect x="1227.8" y="247.59" width="1.2" height="1" fill="#3a3a3a"/><rect x="1226.6" y="248.94" width="4.2" height="1" fill="#902020"/><rect x="1225.4" y="250.28" width="4.8" height="1" fill="#902020"/><rect x="1225.4" y="251.63" width="3.6" height="1" fill="#902020"/><rect x="1226.6" y="252.97" width="4.2" height="1" fill="#f03030"/><rect x="1230.8" y="252.97" width="9.0" height="1" fill="#3a3a3a"/><rect x="1240.4" y="252.97" width="0.6" height="1" fill="#2a9a70"/><rect x="1241.6" y="252.97" width="1.2" height="1" fill="#3a3a3a"/><rect x="1226.6" y="254.32" width="6.0" height="1" fill="#f03030"/><rect x="1226.6" y="255.67" width="9.6" height="1" fill="#f03030"/><rect x="1236.2" y="255.67" width="4.2" height="1" fill="#b03030"/><rect x="1226.6" y="257.01" width="2.4" height="1" fill="#f03030"/><rect x="1226.6" y="258.36" width="4.2" height="1" fill="#f03030"/><rect x="1230.8" y="258.36" width="13.8" height="1" fill="#3a3a3a"/><rect x="1245.2" y="258.36" width="1.2" height="1" fill="#2a9a70"/><rect x="1246.4" y="258.36" width="9.0" height="1" fill="#3a3a3a"/><rect x="1256.0" y="258.36" width="1.2" height="1" fill="#2a9a70"/><rect x="1257.8" y="258.36" width="2.4" height="1" fill="#3a3a3a"/><rect x="1225.4" y="259.70" width="0.6" height="1" fill="#902020"/><rect x="1226.6" y="261.05" width="6.6" height="1" fill="#902020"/><rect x="1233.8" y="261.05" width="6.0" height="1" fill="#f03030"/><rect x="1239.8" y="261.05" width="10.2" height="1" fill="#3a3a3a"/><rect x="1250.6" y="261.05" width="1.2" height="1" fill="#902020"/><rect x="1225.4" y="262.39" width="4.8" height="1" fill="#902020"/><rect x="1224.2" y="263.74" width="9.0" height="1" fill="#902020"/><rect x="1223.0" y="265.08" width="1.8" height="1" fill="#902020"/><rect x="1221.8" y="266.43" width="1.2" height="1" fill="#3a3a3a"/><rect x="1220.6" y="267.77" width="1.2" height="1" fill="#3a3a3a"/></g>
</svg>
<div class="layer" id="menubar-labels">
<span class="x" style="left:41.55px;top:18.66px;font-size:12.8px;color:#333333;transform:scaleX(0.9537)">File</span>
<span class="x" style="left:75.60px;top:18.66px;font-size:12.8px;color:#333333;transform:scaleX(0.9956)">Edit</span>
<span class="x" style="left:114.20px;top:18.66px;font-size:12.8px;color:#333333;transform:scaleX(0.9747)">Selection</span>
<span class="x" style="left:180.70px;top:18.66px;font-size:12.8px;color:#333333;transform:scaleX(0.9553)">View</span>
<span class="x" style="left:223.60px;top:18.66px;font-size:12.8px;color:#333333;transform:scaleX(0.9378)">Go</span>
<span class="x" style="left:254.71px;top:18.66px;font-size:12.8px;color:#333333;transform:scaleX(0.9884)">Run</span>
<span class="x" style="left:293.40px;top:18.66px;font-size:12.8px;color:#333333;transform:scaleX(0.9934)">Terminal</span>
<span class="x" style="left:355.17px;top:18.66px;font-size:12.8px;color:#333333;transform:scaleX(1.0317)">Help</span>
<span class="x" style="left:518.40px;top:18.65px;font-size:11.7px;color:#333333;transform:scaleX(0.9945)">MgtEvent.tsx - react-mgtEvents - Visual Studio Code</span>
</div>
<div class="layer" id="explorer-labels">
<span class="x" style="left:67.10px;top:49.73px;font-size:10.6px;color:#6f6f6f;transform:scaleX(0.8390)">EXPLORER</span>
<span class="x" style="left:67.10px;top:78.09px;font-size:10.7px;color:#525252;transform:scaleX(0.9436);font-weight:bold">OPEN EDITORS</span>
<span class="x" style="left:67.10px;top:99.89px;font-size:10.7px;color:#525252;transform:scaleX(0.9495);font-weight:bold">REACT-MGTEVENTS</span>
<span class="x" style="left:67.00px;top:614.99px;font-size:10.7px;color:#525252;transform:scaleX(0.9599);font-weight:bold">OUTLINE</span>
<span class="x" style="left:67.00px;top:636.89px;font-size:10.7px;color:#525252;transform:scaleX(0.9790);font-weight:bold">TIMELINE</span>
<span class="x" style="left:67.00px;top:658.59px;font-size:10.7px;color:#525252;transform:scaleX(0.9404);font-weight:bold">TYPESCRIPT - EXPORT VIEW</span>
<span class="x" style="left:67.00px;top:679.89px;font-size:10.7px;color:#525252;transform:scaleX(0.9274);font-weight:bold">CODETOUR</span>
<span class="x" style="left:88.98px;top:118.54px;font-size:12.75px;color:#b01011;transform:scaleX(0.9836)">webparts</span>
<span class="x" style="left:141.90px;top:118.54px;font-size:12.75px;color:#d78a8a">\</span>
<span class="x" style="left:148.60px;top:118.54px;font-size:12.75px;color:#b01011;transform:scaleX(0.9840)">mgtEvents</span>
<span class="x" style="left:96.00px;top:140.11px;font-size:12.75px;color:#616161;transform:scaleX(1.0133)">components</span>
<span class="x" style="left:103.12px;top:161.68px;font-size:12.75px;color:#616161;transform:scaleX(0.9820)">IMgtEventsProps.ts</span>
<span class="x" style="left:103.11px;top:183.25px;font-size:12.75px;color:#ffffff;transform:scaleX(0.9861)">MgtEvent.tsx</span>
<span class="x" style="left:103.12px;top:204.82px;font-size:12.75px;color:#616161;transform:scaleX(0.9763)">MgtEvents.tsx</span>
<span class="x" style="left:103.13px;top:226.39px;font-size:12.75px;color:#616161;transform:scaleX(0.9704)">MgtPersons.tsx</span>
<span class="x" style="left:96.50px;top:247.96px;font-size:12.75px;color:#616161;transform:scaleX(0.9395)">loc</span>
<span class="x" style="left:95.52px;top:269.53px;font-size:12.75px;color:#616161;transform:scaleX(0.9811)">MgtEventsWebPart.manif...</span>
<span class="x" style="left:95.52px;top:291.10px;font-size:12.75px;color:#b01011;transform:scaleX(0.9763)">MgtEventsWebPart.ts</span>
<span class="x" style="left:228.10px;top:290.76px;font-size:12px;color:#b01011">2</span>
<span class="x" style="left:88.40px;top:312.67px;font-size:12.75px;color:#616161;transform:scaleX(0.9755)">index.ts</span>
<span class="x" style="left:80.80px;top:334.24px;font-size:12.75px;color:#616161;transform:scaleX(0.9725)">teams</span>
<span class="x" style="left:80.80px;top:355.81px;font-size:12.75px;color:#616161;transform:scaleX(1.0299)">temp</span>
<span class="x" style="left:80.80px;top:377.38px;font-size:12.75px;color:#616161;transform:scaleX(1.0280)">tools</span>
<span class="x" style="left:79.26px;top:398.95px;font-size:12.75px;color:#616161;transform:scaleX(1.0429)">.editorconfig</span>
<span class="x" style="left:79.25px;top:420.52px;font-size:12.75px;color:#616161;transform:scaleX(1.0534)">.gitignore</span>
<span class="x" style="left:79.30px;top:442.09px;font-size:12.75px;color:#616161">.yo-rc.json</span>
<span class="x" style="left:80.30px;top:463.66px;font-size:12.75px;color:#616161;transform:scaleX(1.0156)">gulpfile.js</span>
<span class="x" style="left:80.30px;top:485.23px;font-size:12.75px;color:#616161;transform:scaleX(0.9866)">package-lock.json</span>
<span class="x" style="left:80.30px;top:506.80px;font-size:12.75px;color:#616161;transform:scaleX(0.9701)">package.json</span>
<span class="x" style="left:79.36px;top:528.37px;font-size:12.75px;color:#895503;transform:scaleX(0.9369)">README.md</span>
<span class="x" style="left:220.30px;top:528.03px;font-size:12px;color:#895503;transform:scaleX(0.9800)">9+</span>
<span class="x" style="left:80.30px;top:549.94px;font-size:12.75px;color:#616161">tsconfig.json</span>
<span class="x" style="left:80.30px;top:571.51px;font-size:12.75px;color:#616161">tslint.json</span>
<span class="x" style="left:85.70px;top:161.34px;font-size:10px;color:#4690b4;transform:scaleX(0.9154);font-weight:bold">TS</span>
<span class="x" style="left:85.70px;top:182.91px;font-size:10px;color:#4b98c6;transform:scaleX(0.9154);font-weight:bold">TS</span>
<span class="x" style="left:85.70px;top:204.47px;font-size:10px;color:#4690b4;transform:scaleX(0.9154);font-weight:bold">TS</span>
<span class="x" style="left:85.70px;top:226.04px;font-size:10px;color:#4690b4;transform:scaleX(0.9154);font-weight:bold">TS</span>
<span class="x" style="left:78.10px;top:290.76px;font-size:10px;color:#4690b4;transform:scaleX(0.9154);font-weight:bold">TS</span>
<span class="x" style="left:70.00px;top:312.32px;font-size:10px;color:#4690b4;transform:scaleX(0.9154);font-weight:bold">TS</span>
<span class="x" style="left:78.90px;top:267.55px;font-size:13px;color:#a8a72c;letter-spacing:2.058px">{}</span>
<span class="x" style="left:62.90px;top:440.11px;font-size:13px;color:#a8a72c;letter-spacing:2.058px">{}</span>
<span class="x" style="left:62.90px;top:483.25px;font-size:13px;color:#a8a72c;letter-spacing:2.058px">{}</span>
<span class="x" style="left:62.90px;top:504.82px;font-size:13px;color:#a8a72c;letter-spacing:2.058px">{}</span>
<span class="x" style="left:62.90px;top:547.96px;font-size:13px;color:#a8a72c;letter-spacing:2.058px">{}</span>
<span class="x" style="left:62.90px;top:569.53px;font-size:13px;color:#a8a72c;letter-spacing:2.058px">{}</span>
</div>
<div class="layer" id="tabbar-labels">
<span class="x" style="left:281.37px;top:49.98px;font-size:12.75px;color:#6c6c6c;transform:scaleX(0.9262)">README.md</span>
<span class="x" style="left:411.22px;top:49.98px;font-size:12.75px;color:#6c6c6c;transform:scaleX(0.9783)">MgtEventsWebPart.manifest.json</span>
<span class="x" style="left:654.82px;top:49.98px;font-size:12.75px;color:#6c6c6c;transform:scaleX(0.9755)">MgtEventsWebPart.ts</span>
<span class="x" style="left:835.10px;top:49.98px;font-size:12.75px;color:#333333;transform:scaleX(0.9244);font-style:italic">MgtEvent.tsx</span>
<span class="x" style="left:637.10px;top:49.73px;font-size:10px;color:#4690b4;transform:scaleX(0.9154);font-weight:bold">TS</span>
<span class="x" style="left:816.80px;top:49.73px;font-size:10px;color:#4690b4;transform:scaleX(0.9154);font-weight:bold">TS</span>
<span class="x" style="left:395.20px;top:48.30px;font-size:13px;color:#a8a72c;letter-spacing:2.058px">{}</span>
</div>
<div class="layer" id="breadcrumbs-labels">
<span class="x" style="left:266.20px;top:78.08px;font-size:12.75px;color:#7a7a7a;transform:scaleX(0.8399)">src</span>
<span class="x" style="left:298.77px;top:78.08px;font-size:12.75px;color:#7a7a7a;transform:scaleX(0.9683)">webparts</span>
<span class="x" style="left:364.80px;top:78.08px;font-size:12.75px;color:#7a7a7a;transform:scaleX(0.9840)">mgtEvents</span>
<span class="x" style="left:439.60px;top:78.08px;font-size:12.75px;color:#7a7a7a;transform:scaleX(1.0060)">components</span>
<span class="x" style="left:546.52px;top:78.08px;font-size:12.75px;color:#7a7a7a;transform:scaleX(0.9752)">MgtEvent.tsx</span>
<span class="x" style="left:634.41px;top:78.08px;font-size:12.75px;color:#7a7a7a;transform:scaleX(0.9907)">...</span>
<span class="x" style="left:528.60px;top:77.73px;font-size:10px;color:#4690b4;transform:scaleX(0.9154);font-weight:bold">TS</span>
</div>
<div class="layer" id="statusbar-labels">
<span class="x" style="left:58.60px;top:701.33px;font-size:11.76px;color:#ffffff;transform:scaleX(0.9631)">master*</span>
<span class="x" style="left:160.70px;top:701.33px;font-size:11.76px;color:#ffffff">2</span>
<span class="x" style="left:188.00px;top:701.33px;font-size:11.76px;color:#ffffff;transform:scaleX(0.8866)">15</span>
<span class="x" style="left:220.30px;top:701.33px;font-size:11.76px;color:#ffffff;transform:scaleX(0.9753)">10</span>
<span class="x" style="left:266.30px;top:701.33px;font-size:11.76px;color:#ffffff;transform:scaleX(0.9793)">Disconnected</span>
<span class="x" style="left:368.90px;top:701.33px;font-size:11.76px;color:#ffffff;transform:scaleX(0.9826)">typescriptreact</span>
<span class="x" style="left:447.20px;top:701.33px;font-size:11.76px;color:#ffffff">|</span>
<span class="x" style="left:471.50px;top:701.33px;font-size:11.76px;color:#ffffff;transform:scaleX(0.9803)">MgtEvent.tsx</span>
<span class="x" style="left:874.80px;top:701.33px;font-size:11.76px;color:#ffffff;transform:scaleX(0.9465)">Ln 17, Col 33</span>
<span class="x" style="left:957.70px;top:701.33px;font-size:11.76px;color:#ffffff;transform:scaleX(0.9203)">Spaces: 2</span>
<span class="x" style="left:1021.60px;top:701.33px;font-size:11.76px;color:#ffffff;transform:scaleX(0.9184)">UTF-8</span>
<span class="x" style="left:1068.10px;top:701.33px;font-size:11.76px;color:#ffffff;transform:scaleX(0.8261)">CRLF</span>
<span class="x" style="left:1109.20px;top:701.33px;font-size:11.76px;color:#ffffff;transform:scaleX(0.9445)">TypeScript React</span>
<span class="x" style="left:1209.90px;top:701.33px;font-size:11.76px;color:#ffffff;transform:scaleX(0.9376)">4.1.2</span>
</div>
</body>
</html>
